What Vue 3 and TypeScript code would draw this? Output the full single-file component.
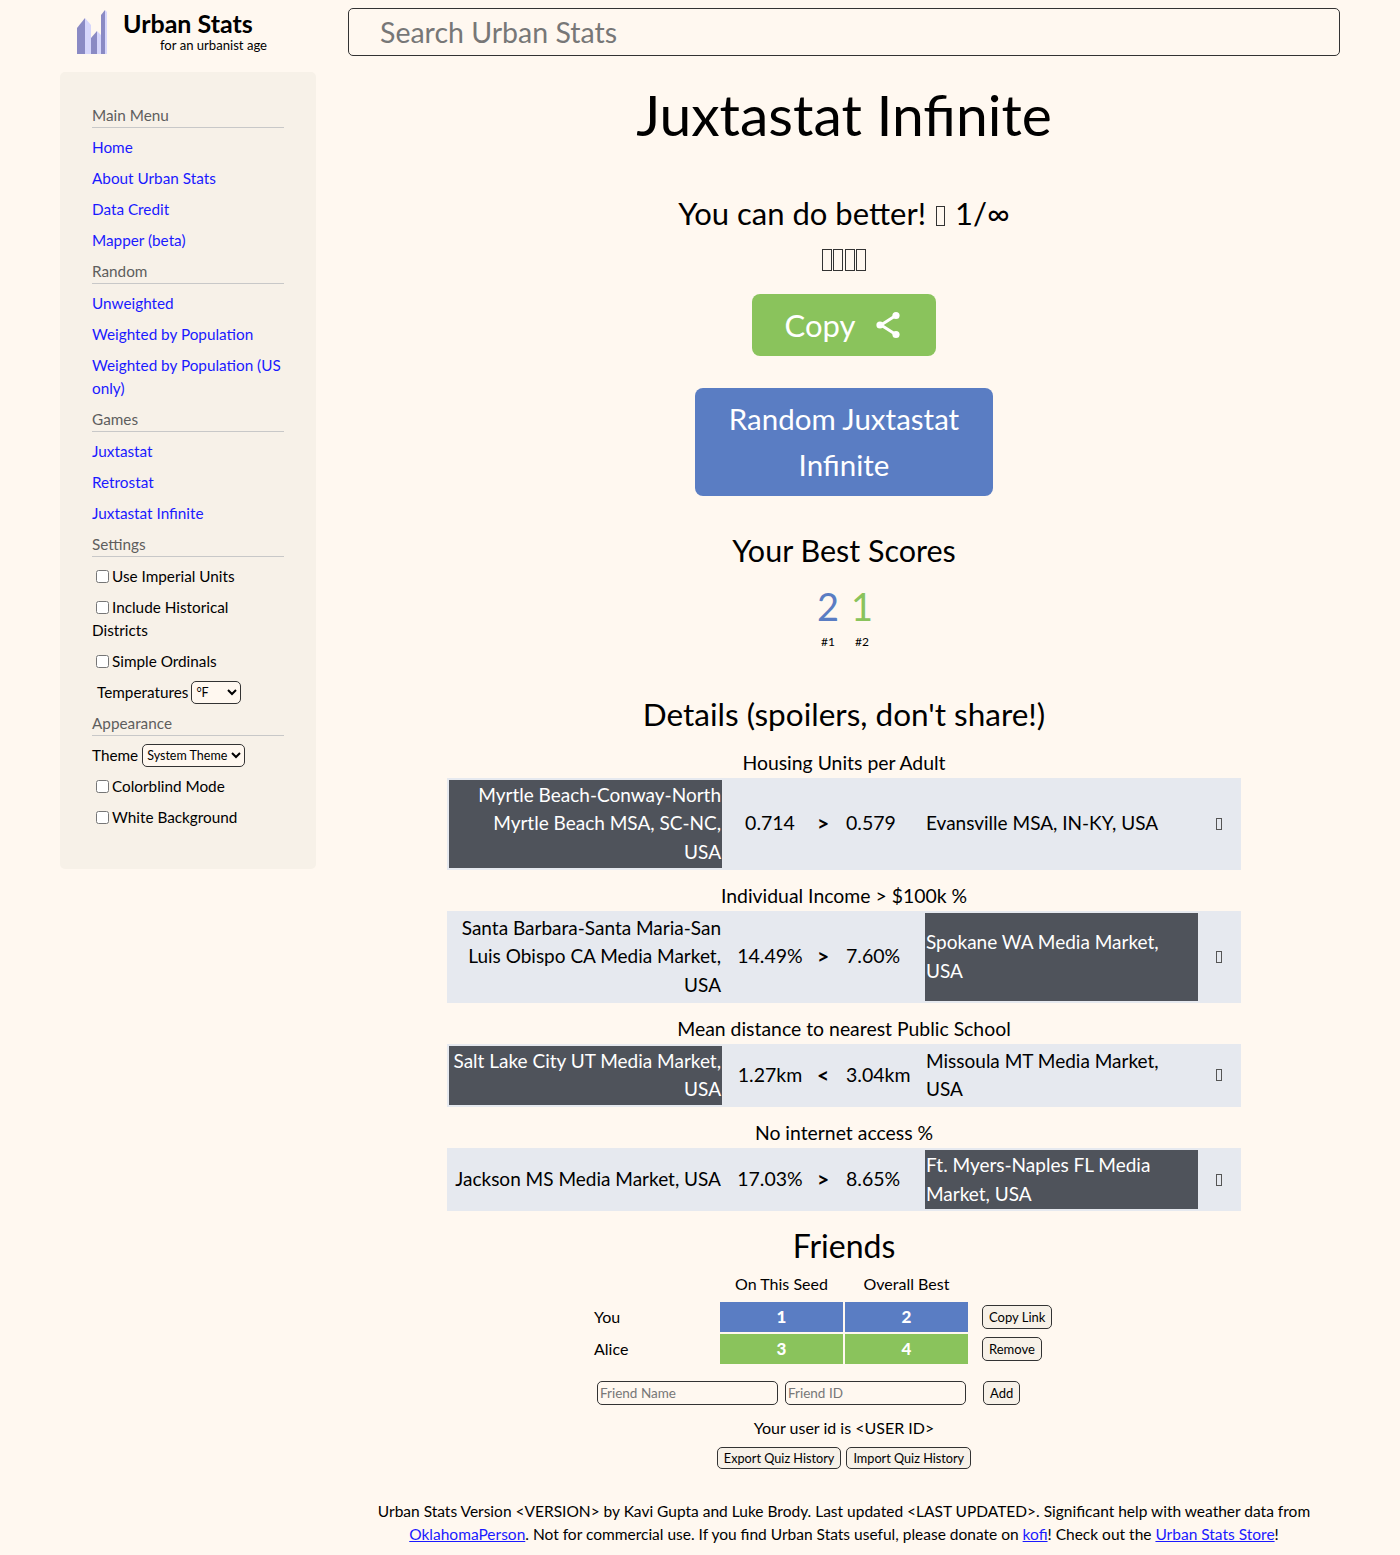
<template>
  <div class="page">
    <header class="header">
      <div class="brand">
        <svg class="logo" width="32" height="44" viewBox="0 0 32 44">
          <polygon points="1,18 9,8 9,44 1,44" fill="#8a8ac4" />
          <polygon points="9,8 15,15 15,44 9,44" fill="#d6d6fb" />
          <polygon points="15,28 21,21 21,44 15,44" fill="#8a8ac4" />
          <polygon points="21,21 25,25 25,44 21,44" fill="#d6d6fb" />
          <polygon points="25,5 29,0 29,44 25,44" fill="#8a8ac4" />
          <polygon points="29,0 31,2 31,44 29,44" fill="#d6d6fb" />
        </svg>
        <div class="brand-text">
          <div class="brand-name">Urban Stats</div>
          <div class="brand-sub">for an urbanist age</div>
        </div>
      </div>
      <input class="search" placeholder="Search Urban Stats" />
    </header>

    <div class="body">
      <aside class="sidebar">
        <section v-for="group in menu" :key="group.title" class="group">
          <div class="group-title">{{ group.title }}</div>
          <a v-for="link in group.links" :key="link" class="side-link" href="#">{{ link }}</a>
        </section>
        <section class="group">
          <div class="group-title">Settings</div>
          <label class="check"><input type="checkbox" />Use Imperial Units</label>
          <label class="check"><input type="checkbox" />Include Historical Districts</label>
          <label class="check"><input type="checkbox" />Simple Ordinals</label>
          <label class="pick temp">Temperatures
            <select class="temp-select"><option>°F</option></select>
          </label>
        </section>
        <section class="group">
          <div class="group-title">Appearance</div>
          <label class="pick">Theme
            <select class="theme-select"><option>System Theme</option></select>
          </label>
          <label class="check"><input type="checkbox" />Colorblind Mode</label>
          <label class="check"><input type="checkbox" />White Background</label>
        </section>
      </aside>

      <main class="main">
        <h1 class="title">Juxtastat Infinite</h1>
        <div class="verdict">You can do better! <span class="tofu"></span> 1/∞</div>
        <div class="squares"><span v-for="n in 4" :key="n" class="tofu"></span></div>
        <button class="copy">
          Copy
          <svg width="30" height="30" viewBox="0 0 30 30">
            <path d="M22 6 L8 15 L22 24" fill="none" stroke="#fff" stroke-width="3" />
            <circle cx="23" cy="5.5" r="3.6" fill="#fff" />
            <circle cx="7" cy="15" r="3.6" fill="#fff" />
            <circle cx="23" cy="24.5" r="3.6" fill="#fff" />
          </svg>
        </button>
        <button class="random">Random Juxtastat Infinite</button>

        <div class="best-title">Your Best Scores</div>
        <div class="best">
          <div v-for="s in best" :key="s.label" class="best-item">
            <div class="best-value" :class="s.tone">{{ s.value }}</div>
            <div class="best-label">{{ s.label }}</div>
          </div>
        </div>

        <div class="details-title">Details (spoilers, don't share!)</div>
        <div v-for="q in questions" :key="q.stat" class="question">
          <div class="stat">{{ q.stat }}</div>
          <div class="row">
            <div class="name left" :class="{ won: q.winner === 'left' }"><span>{{ q.left }}</span></div>
            <div class="val">{{ q.a }}</div>
            <div class="sign">{{ q.sign }}</div>
            <div class="val second">{{ q.b }}</div>
            <div class="name right" :class="{ won: q.winner === 'right' }"><span>{{ q.right }}</span></div>
            <div class="mark"><span class="tofu"></span></div>
          </div>
        </div>

        <div class="friends-title">Friends</div>
        <div class="friends">
          <div></div>
          <div class="col-head">On This Seed</div>
          <div class="col-head">Overall Best</div>
          <div></div>

          <div class="friend">You</div>
          <div class="cell blue">1</div>
          <div class="cell blue">2</div>
          <div class="act"><button class="btn">Copy Link</button></div>

          <div class="friend">Alice</div>
          <div class="cell green">3</div>
          <div class="cell green">4</div>
          <div class="act"><button class="btn">Remove</button></div>
        </div>
        <div class="add-row">
          <input class="friend-input" placeholder="Friend Name" />
          <input class="friend-input" placeholder="Friend ID" />
          <button class="btn add">Add</button>
        </div>
        <div class="user-id">Your user id is &lt;USER ID&gt;</div>
        <div class="history">
          <button class="btn">Export Quiz History</button>
          <button class="btn">Import Quiz History</button>
        </div>
        <footer class="footer">
          Urban Stats Version &lt;VERSION&gt; by Kavi Gupta and Luke Brody. Last updated &lt;LAST UPDATED&gt;. Significant help with weather data from
          <a href="#">OklahomaPerson</a>. Not for commercial use. If you find Urban Stats useful, please donate on <a href="#">kofi</a>! Check out the <a href="#">Urban Stats Store</a>!
        </footer>
      </main>
    </div>
  </div>
</template>

<script setup lang="ts">
const menu = [
  { title: 'Main Menu', links: ['Home', 'About Urban Stats', 'Data Credit', 'Mapper (beta)'] },
  { title: 'Random', links: ['Unweighted', 'Weighted by Population', 'Weighted by Population (US only)'] },
  { title: 'Games', links: ['Juxtastat', 'Retrostat', 'Juxtastat Infinite'] }
]

const best = [
  { value: 2, label: '#1', tone: 'blue-text' },
  { value: 1, label: '#2', tone: 'green-text' }
]

// names keep the line breaks of the original, the substitute font is narrower
const questions = [
  { stat: 'Housing Units per Adult', left: 'Myrtle Beach-Conway-North\nMyrtle Beach MSA, SC-NC,\nUSA', a: '0.714', sign: '>', b: '0.579', right: 'Evansville MSA, IN-KY, USA', winner: 'left' },
  { stat: 'Individual Income > $100k %', left: 'Santa Barbara-Santa Maria-San\nLuis Obispo CA Media Market,\nUSA', a: '14.49%', sign: '>', b: '7.60%', right: 'Spokane WA Media Market,\nUSA', winner: 'right' },
  { stat: 'Mean distance to nearest Public School', left: 'Salt Lake City UT Media Market,\nUSA', a: '1.27km', sign: '<', b: '3.04km', right: 'Missoula MT Media Market,\nUSA', winner: 'left' },
  { stat: 'No internet access %', left: 'Jackson MS Media Market, USA', a: '17.03%', sign: '>', b: '8.65%', right: 'Ft. Myers-Naples FL Media\nMarket, USA', winner: 'right' }
]
</script>

<style>
body {
  background: #fff8f0;
}
</style>

<style scoped>
.page {
  font-family: Lato, "Liberation Sans", sans-serif;
  color: #000;
  height: 1555px;
  overflow: hidden;
  padding: 8px 60px 0;
  box-sizing: border-box;
}

.header {
  display: flex;
  height: 48px;
  gap: 32px;
}

.brand {
  width: 256px;
  flex: none;
  display: flex;
  padding-left: 16px;
  box-sizing: border-box;
}

.logo {
  margin-top: 2px;
}

.brand-text {
  margin-left: 15px;
}

.brand-name {
  font-size: 25px;
  font-weight: 700;
  line-height: 30px;
}

.brand-sub {
  font-size: 13.1px;
  line-height: 14px;
  margin-left: 37px;
}

.search {
  flex: 1;
  height: 48px;
  box-sizing: border-box;
  font: inherit;
  font-size: 28.5px;
  padding: 0 31px;
  background: #fff8f0;
  border: 1px solid #333;
  border-radius: 5px;
}

.search::placeholder {
  color: #777;
}

.body {
  display: flex;
  gap: 32px;
  margin-top: 16px;
}

.sidebar {
  width: 256px;
  height: 797px;
  flex: none;
  box-sizing: border-box;
  background: #f7f1e8;
  border-radius: 5px;
  padding: 32px 32px 0;
  font-size: 15.3px;
  line-height: 23px;
}

.group-title {
  color: #5e5e5e;
  border-bottom: 1px solid #c8c8c8;
  margin-bottom: 8px;
}

.side-link {
  display: block;
  color: #1a1aff;
  text-decoration: none;
  margin-bottom: 8px;
}

.check {
  display: block;
  margin-bottom: 8px;
}

.check input {
  margin: 0 3px 0 4px;
  vertical-align: -1px;
}

.pick {
  display: flex;
  align-items: center;
  gap: 4px;
  height: 23px;
  margin-bottom: 8px;
}

.temp {
  margin-left: 5px;
  gap: 3px;
}

select {
  font: inherit;
  font-size: 12.5px;
  height: 23px;
  background: #fff8f0;
  border: 1px solid #333;
  border-radius: 5px;
  color: #000;
}

.temp-select {
  width: 50px;
}

.theme-select {
  width: 103px;
}

.main {
  flex: 1;
  min-width: 0;
  text-align: center;
}

.title {
  font-size: 57px;
  line-height: 72px;
  font-weight: 400;
  margin: 6px 0 0;
}

.verdict {
  font-size: 31px;
  line-height: 46px;
  margin-top: 40px;
}

.tofu {
  display: inline-block;
  box-sizing: border-box;
  border: 1px solid #333;
}

.verdict .tofu {
  width: 9px;
  height: 20px;
  vertical-align: -1px;
  margin: 0 2px;
}

.squares {
  display: flex;
  justify-content: center;
  align-items: center;
  height: 28px;
  margin-top: 10px;
}

.squares .tofu {
  width: 10px;
  height: 22px;
  margin: 0 0.75px;
}

button {
  font-family: inherit;
}

.copy {
  display: flex;
  align-items: center;
  justify-content: center;
  gap: 18px;
  width: 184px;
  height: 62px;
  margin: 20px auto 0;
  background: #8ac35c;
  color: #fff;
  border: none;
  border-radius: 8px;
  font-size: 31px;
}

.random {
  display: block;
  width: 298px;
  height: 108px;
  margin: 32px auto 0;
  padding: 0 20px;
  background: #5a7dc3;
  color: #fff;
  border: none;
  border-radius: 8px;
  font-size: 29.5px;
  line-height: 46px;
}

.best-title {
  font-size: 30.5px;
  line-height: 40px;
  margin-top: 34px;
}

.best {
  display: flex;
  justify-content: center;
  gap: 15px;
  margin-top: 13px;
  padding-left: 2px;
}

.best-item {
  width: 19px;
  display: flex;
  flex-direction: column;
  align-items: center;
}

.best-value {
  font-size: 38px;
  line-height: 46px;
}

.best-label {
  font-size: 12px;
  line-height: 15px;
  margin-top: 5px;
}

.blue-text {
  color: #5a7dc3;
}

.green-text {
  color: #8ac35c;
}

.details-title {
  font-size: 31.5px;
  line-height: 46px;
  margin-top: 42px;
  margin-bottom: 0.4px;
}

.question {
  width: 794px;
  margin: 0 auto;
}

.stat {
  font-size: 19.4px;
  line-height: 30px;
  margin-top: 10.6px;
}

.row {
  display: grid;
  grid-template-columns: 273px 96px 10px 97px 273px 1fr;
  padding: 2px;
  background: #e6e9ef;
  font-size: 19px;
  line-height: 28.8px;
  text-align: left;
}

.row > div {
  display: flex;
  align-items: center;
  padding: 1px 0;
}

.name span {
  display: block;
  white-space: pre;
}

.row .left {
  justify-content: flex-end;
  text-align: right;
  padding-right: 1px;
}

.row .right {
  padding-left: 1px;
}

.row .won {
  background: #4f535b;
  color: #fff;
}

.row .val {
  justify-content: center;
  font-size: 19.5px;
}

.row .second {
  justify-content: flex-start;
  padding-left: 18px;
}

.row .sign {
  justify-content: center;
  font-weight: 700;
  font-size: 21px;
}

.row .mark {
  justify-content: center;
}

.mark .tofu {
  width: 6px;
  height: 12px;
  border-color: #555;
}

.friends-title {
  font-size: 32px;
  line-height: 46px;
  margin-top: 12px;
}

.friends {
  display: grid;
  grid-template-columns: 124px 123px 123px 1fr;
  gap: 2px;
  width: 500px;
  margin: 3px auto 0;
  text-align: left;
  font-size: 16px;
  line-height: 30px;
}

.col-head {
  text-align: center;
  line-height: 24px;
  margin-bottom: 4px;
}

.cell {
  color: #fff;
  text-align: center;
  font-weight: 900;
  font-size: 17px;
}

.cell.green {
  background: #8ac35c;
}

.cell.blue {
  background: #5a7dc3;
}

.act {
  display: flex;
  align-items: center;
}

.act .btn {
  margin-left: 12px;
}

.btn {
  background: #f7f1e8;
  border: 1px solid #333;
  border-radius: 5px;
  color: #000;
  font-size: 13px;
  height: 24px;
  padding: 0 6px;
  white-space: nowrap;
}

.add-row {
  display: flex;
  gap: 7px;
  width: 500px;
  box-sizing: border-box;
  margin: 17px auto 0;
  padding-left: 3px;
}

.friend-input {
  width: 181px;
  height: 24px;
  box-sizing: border-box;
  font: inherit;
  font-size: 13.5px;
  padding: 0 2px;
  background: #fff8f0;
  border: 1px solid #333;
  border-radius: 5px;
}

.friend-input::placeholder {
  color: #777;
}

.add {
  margin-left: 10px;
}

.user-id {
  font-size: 16px;
  line-height: 24px;
  margin-top: 11px;
}

.history {
  display: flex;
  justify-content: center;
  gap: 5px;
  margin-top: 7px;
}

.history .btn {
  height: 22px;
  font-size: 12.7px;
}

.footer {
  font-size: 15.5px;
  line-height: 23px;
  margin-top: 31px;
}

.footer a {
  color: #1a1aff;
}
</style>
